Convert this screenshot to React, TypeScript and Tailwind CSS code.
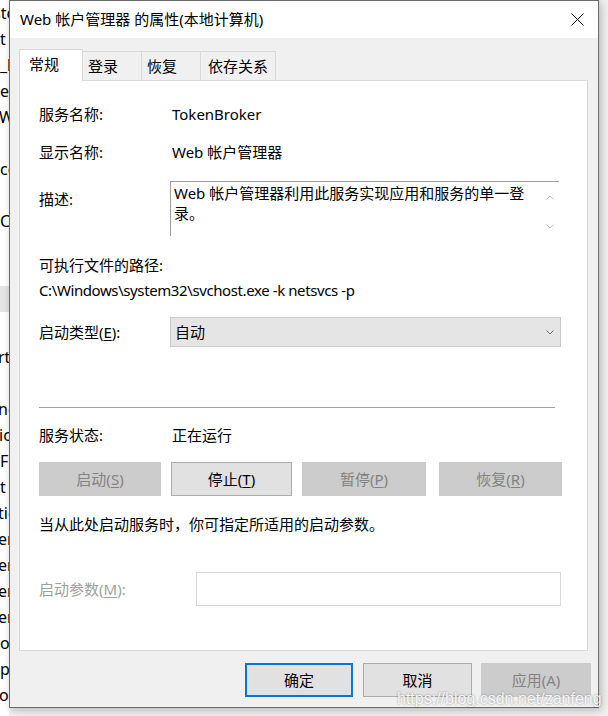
import React from "react";

const font = "font-['Noto_Sans','Noto_Sans_CJK_SC',sans-serif]";

function Chevron({ up = false, className = "" }: { up?: boolean; className?: string }) {
  return (
    <svg width="8" height="5" viewBox="0 0 8 5" className={className}>
      <path
        d={up ? "M0.5 4.5 L4 1 L7.5 4.5" : "M0.5 0.5 L4 4 L7.5 0.5"}
        fill="none"
        stroke="currentColor"
        strokeWidth="1"
      />
    </svg>
  );
}

function Btn({
  children,
  disabled = false,
  primary = false,
  className = "",
}: {
  children: React.ReactNode;
  disabled?: boolean;
  primary?: boolean;
  className?: string;
}) {
  let look = "bg-[#e1e1e1] border border-[#adadad] text-black";
  if (disabled) look = "bg-[#cccccc] border border-[#cccccc] text-[#838383]";
  if (primary) look = "bg-[#e1e1e1] border-2 border-[#0078d7] text-black";
  return (
    <div className={`flex h-[34px] items-center justify-center text-[15px] ${look} ${className}`}>
      {children}
    </div>
  );
}

const behind = [
  { t: "stc", ml: "-ml-[7px]" },
  { t: "t", ml: "ml-0" },
  { t: "_b", ml: "ml-0" },
  { t: "e_", ml: "ml-0" },
  { t: "Wi", ml: "-ml-[1px]" },
  { t: "", ml: "ml-0" },
  { t: "ce", ml: "ml-0" },
  { t: "", ml: "ml-0" },
  { t: "Co", ml: "ml-0" },
  { t: "", ml: "ml-0" },
  { t: "", ml: "ml-0" },
];

const behind2 = [
  { t: "rti", ml: "-ml-[2px]" },
  { t: "", ml: "ml-0" },
  { t: "nc", ml: "-ml-[2px]" },
  { t: "ic", ml: "-ml-[1px]" },
  { t: " F", ml: "ml-0" },
  { t: "t l", ml: "ml-0" },
  { t: "tic", ml: "-ml-[2px]" },
  { t: "er", ml: "-ml-[2px]" },
  { t: "er", ml: "-ml-[2px]" },
  { t: "er", ml: "-ml-[2px]" },
  { t: "er", ml: "-ml-[2px]" },
  { t: "o", ml: "ml-0" },
  { t: "p", ml: "ml-0" },
  { t: "ol", ml: "-ml-[1px]" },
];

export default function App() {
  return (
    <div className={`relative flex h-[716px] w-[608px] overflow-hidden bg-[#f0f0f0] ${font}`}>
      {/* window behind the dialog */}
      <div className="flex h-[716px] w-[9px] flex-col overflow-hidden bg-white text-[16px] leading-[26px] text-black">
        {behind.map((r, i) => (
          <div key={i} className={`h-[26px] whitespace-nowrap ${r.ml}`}>
            {r.t}
          </div>
        ))}
        <div className="h-[26px] bg-[#e5e5e5]" />
        <div className="h-[32px]" />
        {behind2.map((r, i) => (
          <div key={i} className={`h-[26px] whitespace-nowrap ${r.ml}`}>
            {r.t}
          </div>
        ))}
      </div>

      {/* dialog */}
      <div className="flex h-[708px] w-[590px] flex-col border border-[#6b6b6b] bg-[#f0f0f0] shadow-[2px_2px_8px_rgba(0,0,0,0.25)]">
        {/* title bar */}
        <div className="flex h-[37px] items-center justify-between bg-white pl-[10px] pr-[14px]">
          <span className="text-[15px] text-black">Web 帐户管理器 的属性(本地计算机)</span>
          <svg width="13" height="13" viewBox="0 0 13 13">
            <path d="M0.5 0.5 L12.5 12.5 M12.5 0.5 L0.5 12.5" stroke="#000" strokeWidth="1" />
          </svg>
        </div>

        <div className="flex flex-1 flex-col pl-[9px] pr-[10px] pt-[11px]">
          {/* tabs */}
          <div className="flex h-[31px] items-end text-[15px] leading-[20px]">
            <div className="relative z-10 -mb-px flex h-[32px] w-[64px] items-center border border-b-0 border-[#d9d9d9] bg-white pb-[3px] pl-[9px]">
              常规
            </div>
            <div className="flex h-[29px] w-[59px] items-center border-t border-r border-[#d9d9d9] pb-[1px] pl-[5px]">
              登录
            </div>
            <div className="flex h-[29px] w-[59px] items-center border-t border-r border-[#d9d9d9] pb-[1px] pl-[5px]">
              恢复
            </div>
            <div className="flex h-[29px] w-[75px] items-center border-t border-r border-[#d9d9d9] pb-[1px] pl-[7px]">
              依存关系
            </div>
          </div>

          {/* panel */}
          <div className="flex h-[571px] w-[569px] flex-col border border-[#d9d9d9] bg-white pl-[19px] text-[15px] leading-[20px] text-black">
            <div className="mt-[23px] flex h-[20px]">
              <div className="w-[133px]">服务名称:</div>
              <div>TokenBroker</div>
            </div>
            <div className="mt-[18px] flex h-[20px]">
              <div className="w-[133px]">显示名称:</div>
              <div>Web 帐户管理器</div>
            </div>
            <div className="mt-[19px] flex h-[55px]">
              <div className="w-[131px] pt-[8px]">描述:</div>
              <div className="flex w-[389px] border-t border-l border-[#a0a0a0] bg-white">
                <div className="flex-1 pl-[3px] pt-[1px]">
                  Web 帐户管理器利用此服务实现应用和服务的单一登
                  <br />
                  录。
                </div>
                <div className="flex w-[19px] flex-col items-center justify-between pb-[7px] pt-[13px] text-[#c2c2c2]">
                  <Chevron up />
                  <Chevron />
                </div>
              </div>
            </div>
            <div className="mt-[19px] h-[20px]">可执行文件的路径:</div>
            <div className="mt-[5px] h-[20px] tracking-[-0.4px]">C:\Windows\system32\svchost.exe -k netsvcs -p</div>
            <div className="mt-[17px] flex h-[30px] items-center">
              <div className="w-[131px]">
                启动类型(<span className="underline underline-offset-2">E</span>):
              </div>
              <div className="flex h-[30px] w-[391px] items-center justify-between border border-[#cccccc] bg-[#e5e5e5] pl-[4px] pr-[6px]">
                <span>自动</span>
                <Chevron className="text-[#707070]" />
              </div>
            </div>
            <div className="mt-[60px] h-px w-[516px] bg-[#a0a0a0]" />
            <div className="mt-[17px] flex h-[20px]">
              <div className="w-[133px]">服务状态:</div>
              <div>正在运行</div>
            </div>
            <div className="mt-[17px] flex">
              <Btn disabled className="w-[122px]">
                启动(<span className="underline underline-offset-2">S</span>)
              </Btn>
              <Btn className="ml-[10px] w-[121px]">
                停止(<span className="underline underline-offset-2">T</span>)
              </Btn>
              <Btn disabled className="ml-[10px] w-[124px]">
                暂停(<span className="underline underline-offset-2">P</span>)
              </Btn>
              <Btn disabled className="ml-[13px] w-[123px]">
                恢复(<span className="underline underline-offset-2">R</span>)
              </Btn>
            </div>
            <div className="mt-[18px] h-[20px]">当从此处启动服务时，你可指定所适用的启动参数。</div>
            <div className="mt-[38px] flex h-[34px] items-center">
              <div className="w-[157px] text-[#a0a0a0]">
                启动参数(<span className="underline underline-offset-2">M</span>):
              </div>
              <div className="h-[34px] w-[365px] border border-[#d9d9d9] bg-white" />
            </div>
          </div>

          {/* dialog buttons */}
          <div className="mt-[12px] flex justify-end">
            <Btn primary className="w-[108px]">
              确定
            </Btn>
            <Btn className="ml-[10px] w-[109px]">取消</Btn>
            <Btn disabled className="ml-[9px] mr-[-3px] w-[110px]">
              应用(A)
            </Btn>
          </div>
        </div>
      </div>

      {/* watermark */}
      <div className="absolute left-[397px] top-[687px] font-['Liberation_Sans',sans-serif] text-[16px] text-white/90 [text-shadow:0_0_2px_rgba(0,0,0,0.45)]">
        https://blog.csdn.net/zanfeng
      </div>
    </div>
  );
}
